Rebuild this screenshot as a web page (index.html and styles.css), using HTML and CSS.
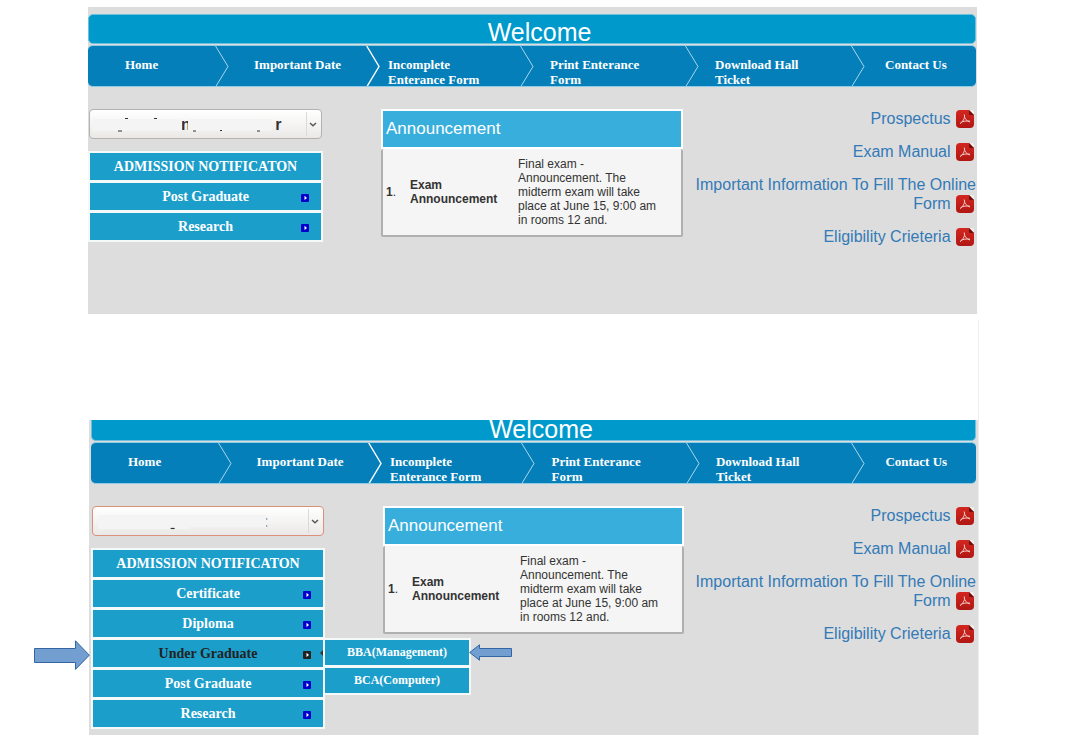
FILE: index.html
```html
<!DOCTYPE html>
<html lang="en">
<head>
<meta charset="utf-8">
<meta name="viewport" content="width=device-width, initial-scale=1">
<title>Welcome</title>
<link rel="stylesheet" href="styles.css">
</head>
<body>
<svg class="defs" width="0" height="0" aria-hidden="true">
  <defs>
    <linearGradient id="red" x1="0" y1="0" x2="0" y2="1">
      <stop offset="0" stop-color="#d42620"/><stop offset="1" stop-color="#b01713"/>
    </linearGradient>
    <symbol id="pdf" viewBox="0 0 18 18">
      <path d="M4 0H13L18 5V14a4 4 0 0 1-4 4H4a4 4 0 0 1-4-4V4a4 4 0 0 1 4-4z" fill="url(#red)"/>
      <path d="M13 0l5 5h-3.500a1.500 1.500 0 0 1-1.500-1.500z" fill="#6d0c0a"/>
      <path d="M13.500 0h1.500a3 3 0 0 1 3 3v1.500z" fill="#f6f2ee"/>
      <path d="M8.200 4.500C9.300 6.500 8 10.500 4.200 13.800M8.300 5C8.300 8.500 10.500 11 14 12M4.500 12.600C7 11.200 10.500 10.600 14 11.200" fill="none" stroke="#f3c9c4" stroke-width="1"/>
    </symbol>
    <symbol id="chev" viewBox="0 0 14 41" preserveAspectRatio="none">
      <path d="M.5 0L13 20.500L.5 41" fill="none" stroke="#a9d6ea" stroke-width="1"/>
    </symbol>
    <symbol id="chev-bold" viewBox="0 0 14 41" preserveAspectRatio="none">
      <path d="M.7 0L13 20.500L.7 41" fill="none" stroke="#fff" stroke-width="1.400"/>
    </symbol>
    <symbol id="more" viewBox="0 0 8 8">
      <rect width="8" height="8" rx="1" fill="currentColor"/>
      <path d="M3.500 1.800L6 4L3.500 6z" fill="#fff"/>
    </symbol>
    <symbol id="drop" viewBox="0 0 16 26">
      <path d="M.5 1V25" stroke="#dcdad8"/>
      <path d="M4 12l3 2.800L10 12" fill="none" stroke="#555" stroke-width="1.400"/>
    </symbol>
  </defs>
</svg>
<main class="page">
  <section class="panel">
    <h1 class="banner">Welcome</h1>
    <nav class="nav">
      <a class="nav-item home" href="#"><span>Home</span><svg><use href="#chev"/></svg></a>
      <a class="nav-item date" href="#"><span>Important Date</span><svg><use href="#chev-bold"/></svg></a>
      <a class="nav-item incomplete" href="#"><span>Incomplete Enterance Form</span><svg><use href="#chev"/></svg></a>
      <a class="nav-item print" href="#"><span>Print Enterance Form</span><svg><use href="#chev"/></svg></a>
      <a class="nav-item ticket" href="#"><span>Download Hall Ticket</span><svg><use href="#chev"/></svg></a>
      <a class="nav-item contact" href="#"><span>Contact Us</span></a>
    </nav>
    <div class="columns">
      <div class="side">
        <div class="picker">
          <select aria-label="Programme"><option>n&nbsp;&nbsp;&nbsp;&nbsp;&nbsp;&nbsp;&nbsp;&nbsp;&nbsp;&nbsp;&nbsp;&nbsp;&nbsp;&nbsp;&nbsp;&nbsp;&nbsp;&nbsp;&nbsp;r</option></select>
          <svg class="marks" viewBox="0 0 233 30" aria-hidden="true">
            <path d="M4 10H93V22H4zM99 10H183V22H99z" fill="#f4f4f4"/>
            <path d="M29 22h4M36 9.500h3M65 9.500h3M104 22h3M131 21.500h2M168 22h3" stroke="#333" stroke-width="1.200"/>
          </svg>
          <svg class="drop" aria-hidden="true"><use href="#drop"/></svg>
        </div>
        <ul class="menu">
          <li class="menu-title">ADMISSION NOTIFICATON</li>
          <li><a href="#"><span>Post Graduate</span><svg><use href="#more"/></svg></a></li>
          <li><a href="#"><span>Research</span><svg><use href="#more"/></svg></a></li>
        </ul>
      </div>
      <section class="news">
        <h2>Announcement</h2>
        <table>
          <tr><td class="num"><b>1</b>.</td><th scope="row">Exam Announcement</th><td class="text">Final exam - Announcement. The midterm exam will take place at June 15, 9:00 am in rooms 12 and.</td></tr>
        </table>
      </section>
      <ul class="files">
        <li><a href="#">Prospectus <svg><use href="#pdf"/></svg></a></li>
        <li><a href="#">Exam Manual <svg><use href="#pdf"/></svg></a></li>
        <li><a href="#">Important Information To Fill The Online Form <svg><use href="#pdf"/></svg></a></li>
        <li><a href="#">Eligibility Crieteria <svg><use href="#pdf"/></svg></a></li>
      </ul>
    </div>
  </section>

  <div class="lower">
  <section class="panel panel-open">
    <h1 class="banner">Welcome</h1>
    <nav class="nav">
      <a class="nav-item home" href="#"><span>Home</span><svg><use href="#chev"/></svg></a>
      <a class="nav-item date" href="#"><span>Important Date</span><svg><use href="#chev-bold"/></svg></a>
      <a class="nav-item incomplete" href="#"><span>Incomplete Enterance Form</span><svg><use href="#chev"/></svg></a>
      <a class="nav-item print" href="#"><span>Print Enterance Form</span><svg><use href="#chev"/></svg></a>
      <a class="nav-item ticket" href="#"><span>Download Hall Ticket</span><svg><use href="#chev"/></svg></a>
      <a class="nav-item contact" href="#"><span>Contact Us</span></a>
    </nav>
    <div class="columns">
      <div class="side">
        <div class="picker picker-focus">
          <select aria-label="Programme"><option></option></select>
          <svg class="marks" viewBox="0 0 233 30" aria-hidden="true">
            <path d="M6 9H176V21H98V23H6z" fill="#f4f4f4"/>
            <path d="M79 22.500h4" stroke="#333" stroke-width="1.200"/>
            <path d="M175.500 12v2M175.500 19v2" stroke="#69a" stroke-width="1"/>
          </svg>
          <svg class="drop" aria-hidden="true"><use href="#drop"/></svg>
        </div>
        <ul class="menu">
          <li class="menu-title">ADMISSION NOTIFICATON</li>
          <li><a href="#"><span>Certificate</span><svg><use href="#more"/></svg></a></li>
          <li><a href="#"><span>Diploma</span><svg><use href="#more"/></svg></a></li>
          <li class="open">
            <a href="#"><span>Under Graduate</span><svg><use href="#more"/></svg></a>
            <svg class="caret" viewBox="0 0 3 6" aria-hidden="true"><path d="M3 0v6L0 3z" fill="#333"/></svg>
            <svg class="pointer pointer-right" viewBox="0 0 56 30" aria-hidden="true"><path d="M.5 8.500H41.500V.8L55.300 15.200L41.500 29.400V22.500H.5z" fill="#729fcf" stroke="#3465a4"/></svg>
            <ul class="submenu">
              <li><a href="#">BBA(Management)</a>
                <svg class="pointer pointer-left" viewBox="0 0 43 17" aria-hidden="true"><path d="M42.500 4.500H10.500V.8L.7 8.500L10.500 16.200V12.500H42.500z" fill="#729fcf" stroke="#3465a4"/></svg>
              </li>
              <li><a href="#">BCA(Computer)</a></li>
            </ul>
          </li>
          <li><a href="#"><span>Post Graduate</span><svg><use href="#more"/></svg></a></li>
          <li><a href="#"><span>Research</span><svg><use href="#more"/></svg></a></li>
        </ul>
      </div>
      <section class="news">
        <h2>Announcement</h2>
        <table>
          <tr><td class="num"><b>1</b>.</td><th scope="row">Exam Announcement</th><td class="text">Final exam - Announcement. The midterm exam will take place at June 15, 9:00 am in rooms 12 and.</td></tr>
        </table>
      </section>
      <ul class="files">
        <li><a href="#">Prospectus <svg><use href="#pdf"/></svg></a></li>
        <li><a href="#">Exam Manual <svg><use href="#pdf"/></svg></a></li>
        <li><a href="#">Important Information To Fill The Online Form <svg><use href="#pdf"/></svg></a></li>
        <li><a href="#">Eligibility Crieteria <svg><use href="#pdf"/></svg></a></li>
      </ul>
    </div>
  </section>
  </div>
</main>
</body>
</html>
```

FILE: styles.css
```css
* { box-sizing: border-box; }
body {
  margin: 0;
  background: #fff;
  color: #333;
  font-family: "Liberation Sans", Arial, sans-serif;
  font-size: 12px;
}
ul { list-style: none; margin: 0; padding: 0; }
a { text-decoration: none; }
.defs { position: absolute; }

.page { padding: 7px 95px 18px 88px; }
.panel {
  margin-right: 2px;
  padding: 7px 1px 68px 0;
  background: #ddd;
}
.lower {
  margin-top: 6px;
  padding: 100px 0 0 1px;
  border-right: 1px solid #eee;
}
.panel-open { margin-right: 0; padding: 0 2px 6px 2px; }

.banner {
  display: flex;
  justify-content: center;
  align-items: flex-end;
  height: 30px;
  margin: 0;
  padding-left: 15px;
  border: 1px solid #6dbfdc;
  border-radius: 5px;
  background: #09c;
  color: #fff;
  font-size: 25px;
  font-weight: 400;
  line-height: 22px;
}
.panel-open .banner { height: 21px; border-top: 0; border-radius: 0 0 5px 5px; }

.nav {
  display: grid;
  grid-template-columns: 141fr 151fr 154fr 165fr 166fr 111fr;
  height: 42px;
  margin-top: 1px;
  overflow: hidden;
  border: 1px solid #8fcbe4;
  border-width: 1px 0;
  border-radius: 5px;
  background: #057fb9;
}
.nav-item {
  display: flex;
  justify-content: space-between;
  min-width: 0;
  color: #fff;
  font-family: "Liberation Serif", "Times New Roman", serif;
  font-size: 13px;
  font-weight: 700;
  line-height: 15px;
}
.nav-item span { padding: 11px 20px 0 0; }
.nav-item svg { flex: none; width: 14px; height: 41px; }
.home { padding-left: 37px; }
.date { padding-left: 25px; }
.incomplete { padding-left: 8px; }
.print { padding-left: 16px; }
.ticket { padding-left: 16px; }
.contact { padding-left: 20px; }

.columns {
  display: grid;
  grid-template-columns: 293fr 302fr 293fr;
  align-items: start;
  margin-top: 22px;
}
.side { padding-right: 58px; }

.picker { display: grid; height: 30px; margin: 0 1px; }
.picker > * { grid-area: 1 / 1; }
.picker select {
  appearance: none;
  width: 100%;
  height: 30px;
  padding: 0 20px 0 91px;
  border: 1px solid #b4b2b0;
  border-radius: 4px;
  background: linear-gradient(#fff, #ebe9e7);
  color: #333;
  font: 700 16px "Liberation Sans", Arial, sans-serif;
}
.picker-focus select { border-color: #d9917c; }
.picker svg { pointer-events: none; }
.marks { width: 100%; height: 30px; }
.drop { justify-self: end; align-self: center; width: 16px; height: 26px; }

.menu, .submenu {
  display: flex;
  flex-direction: column;
  gap: 3px;
  padding: 2px;
  background: #f4fafa;
  font-family: "Liberation Serif", "Times New Roman", serif;
  font-size: 14px;
  font-weight: 700;
  line-height: 27px;
  text-align: center;
}
.menu { margin-top: 12px; }
.menu li { position: relative; background: #1c9eca; color: #fff; }
.menu a {
  display: grid;
  grid-template-columns: 1fr auto 1fr;
  color: inherit;
}
.menu a span { grid-column: 2; }
.menu a svg {
  place-self: center end;
  width: 8px;
  height: 8px;
  margin: 3px 12px 0 0;
  color: #00c;
}
.menu .open { color: #222; }
.menu .open > a svg { color: #222; }
.caret { position: absolute; right: 0; top: 10px; width: 3px; height: 6px; }
.submenu {
  position: absolute;
  left: 100%;
  top: -2px;
  width: 148px;
  font-size: 12px;
  line-height: 25px;
}
.submenu a { display: block; }
.pointer { position: absolute; z-index: 1; }
.pointer-right { right: 100%; top: 0; width: 56px; height: 30px; margin-right: 3px; }
.pointer-left { left: 100%; top: 4px; width: 43px; height: 17px; }

.news { background: #f5f5f5; }
.news h2 {
  margin: 0;
  padding: 0 3px;
  border: 2px solid #fff;
  background: #38aedd;
  color: #fff;
  font-size: 17px;
  font-weight: 400;
  line-height: 36px;
}
.news table {
  width: 100%;
  table-layout: fixed;
  border: 2px solid #b0b0b0;
  border-top: 0;
  border-radius: 2px;
  border-collapse: separate;
  border-spacing: 0;
  line-height: 14px;
}
.news td, .news th { padding: 8px 0; text-align: left; vertical-align: middle; }
.news .num { width: 27px; padding-left: 3px; }
.news th { width: 108px; padding-right: 10px; }
.news .text { padding-right: 16px; }

.files {
  display: flex;
  flex-direction: column;
  gap: 14px;
  font-size: 16px;
  line-height: 19px;
  text-align: right;
}
.files a { color: #337ab7; }
.files svg { width: 18px; height: 18px; margin: 0 2px 0 1px; vertical-align: -4px; }
```
